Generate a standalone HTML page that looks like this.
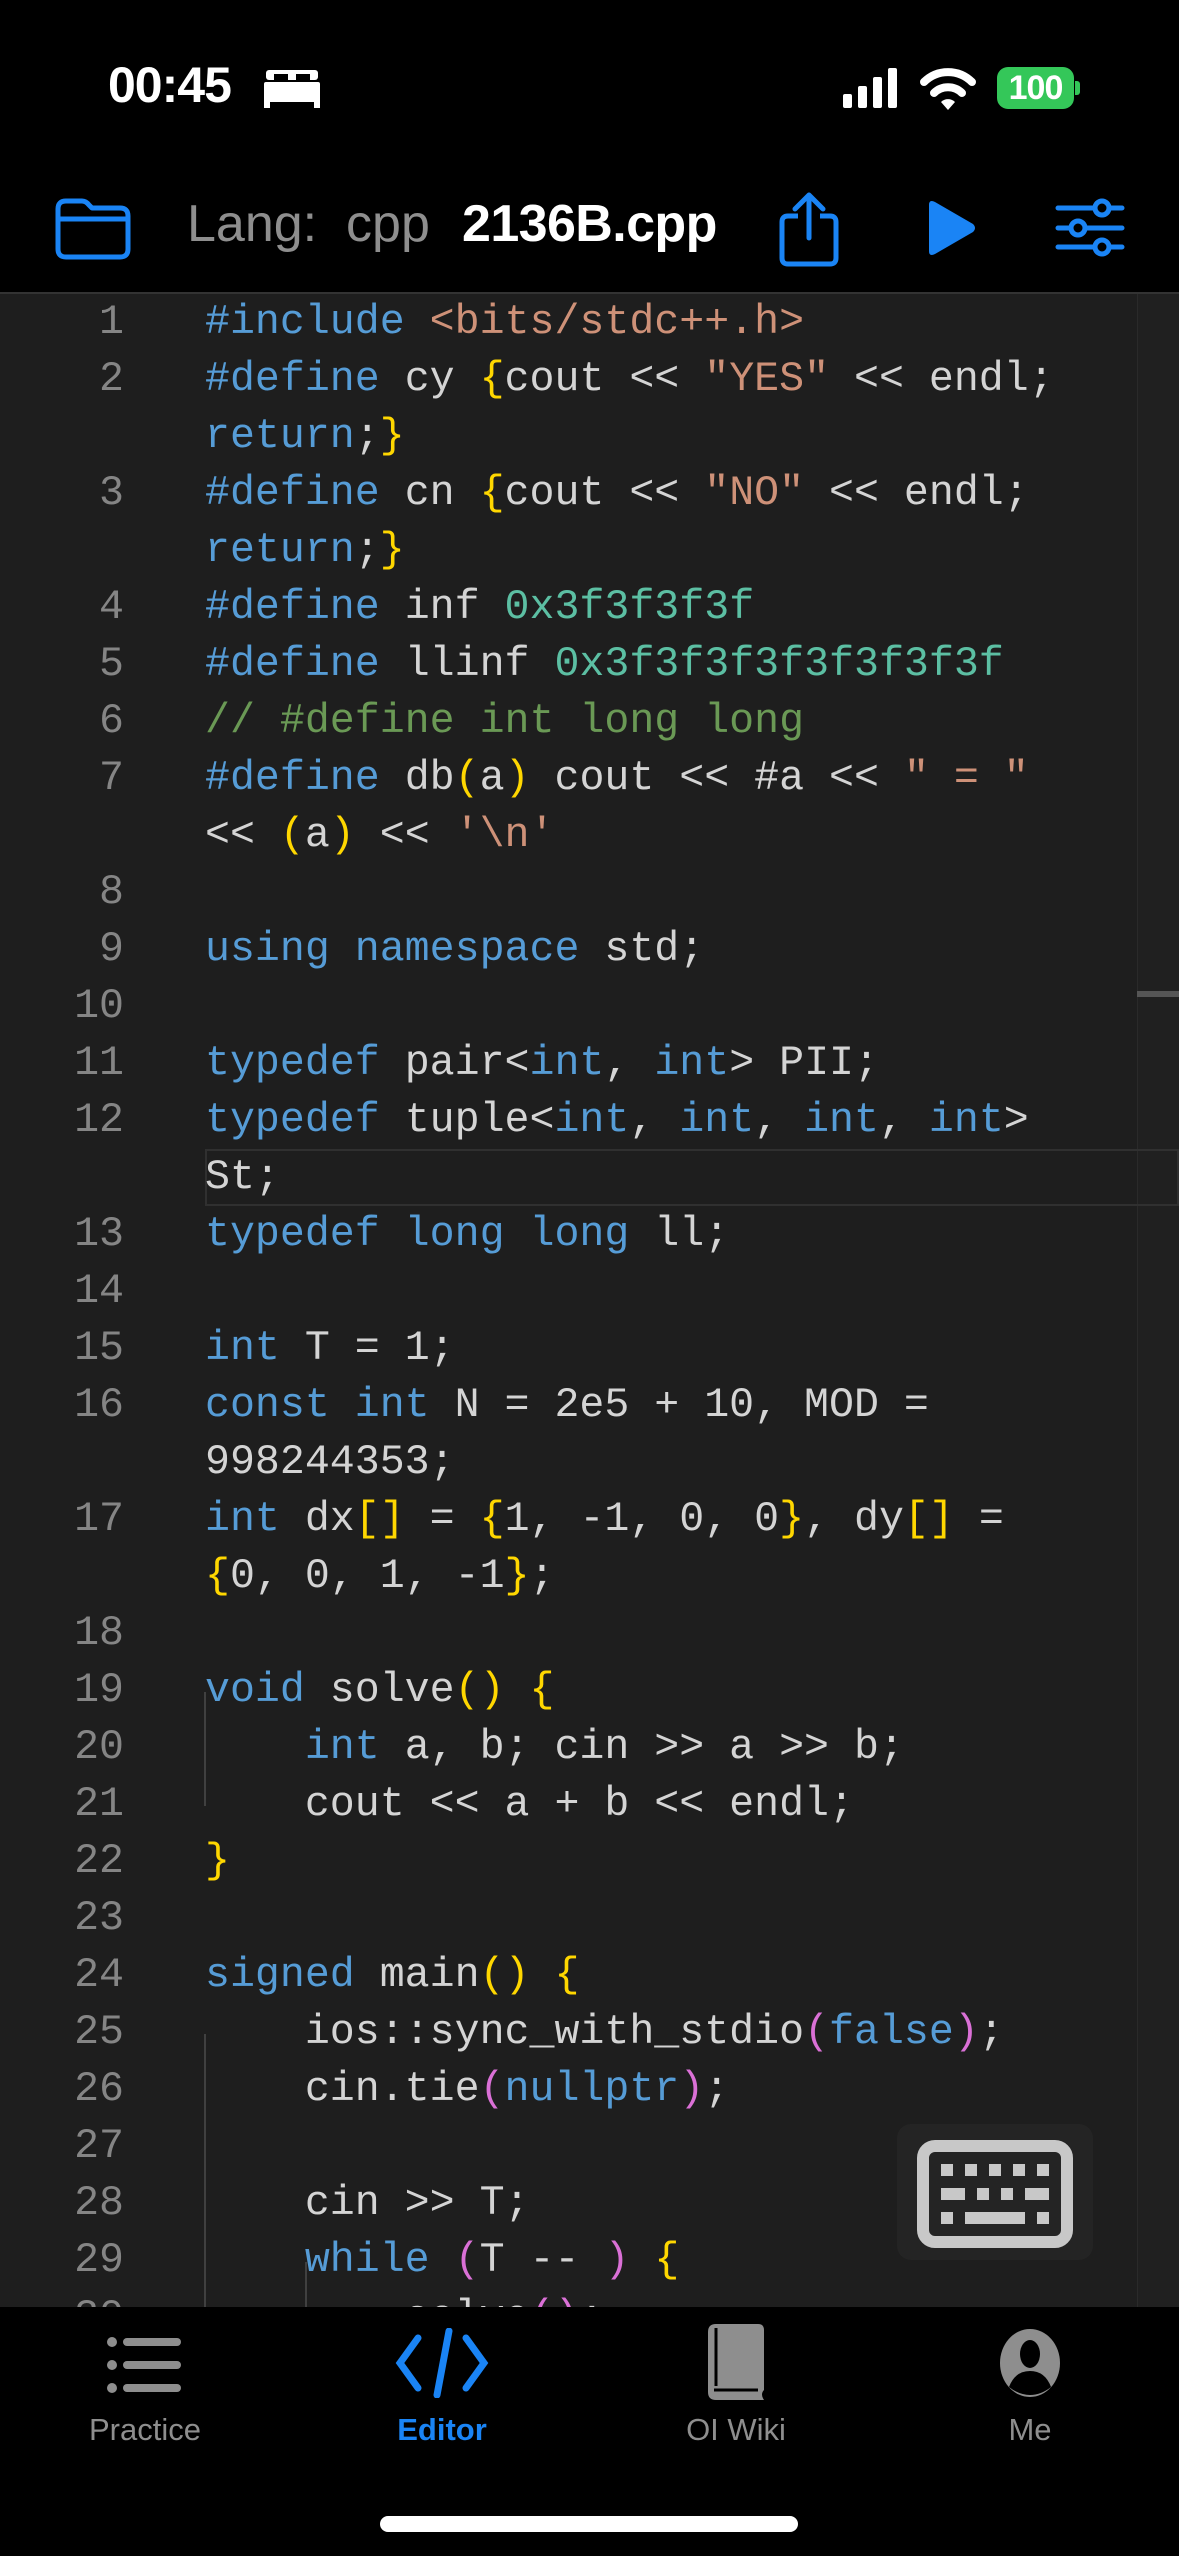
<!DOCTYPE html>
<html><head><meta charset="utf-8"><style>
*{margin:0;padding:0;box-sizing:border-box}
body{width:1179px;height:2556px;background:#000;position:relative;overflow:hidden;font-family:"Liberation Sans",sans-serif}
.abs{position:absolute}
#code{position:absolute;left:0;top:292px;width:1179px;height:2015px;background:#1e1e1e;border-top:2px solid #333;overflow:hidden}
#gutterR{position:absolute;left:1137px;top:0;width:42px;height:100%;background:#202020;border-left:1px solid #2a2a2a}
.row{position:absolute;left:0;height:57px;line-height:57px;font-family:"Liberation Mono",monospace;font-size:41.6px;white-space:pre;color:#d4d4d4;letter-spacing:0}
.ln{position:absolute;left:40px;width:84px;text-align:right;color:#858585}
.tx{position:absolute;left:205px}
.k{color:#569cd6}.s{color:#ce9178}.n{color:#5cbfa3}.c{color:#6a9955}.y{color:#ffd700}.p{color:#da70d6}
.tab{position:absolute;top:2412px;font-size:31px;color:#8e8e8e;text-align:center;width:200px}
</style></head><body>
<!-- status bar -->
<div class="abs" style="left:108px;top:56px;font-size:50px;font-weight:bold;color:#fff;letter-spacing:-1px">00:45</div>
<svg class="abs" style="left:264px;top:68px" width="56" height="40" viewBox="0 0 56 40"><rect x="2" y="2" width="52" height="10" rx="3" fill="#fff"/><rect x="0" y="14" width="56" height="20" rx="2" fill="#fff"/><rect x="0" y="30" width="6" height="10" fill="#fff"/><rect x="50" y="30" width="6" height="10" fill="#fff"/><rect x="10" y="6" width="14" height="8" fill="#000"/><rect x="32" y="6" width="14" height="8" fill="#000"/></svg>
<svg class="abs" style="left:843px;top:68px" width="58" height="40"><rect x="0" y="26" width="9" height="14" rx="2" fill="#fff"/><rect x="15" y="18" width="9" height="22" rx="2" fill="#fff"/><rect x="30" y="9" width="9" height="31" rx="2" fill="#fff"/><rect x="45" y="0" width="9" height="40" rx="2" fill="#fff"/></svg>
<svg class="abs" style="left:920px;top:66px" width="56" height="44" viewBox="0 0 56 44"><path d="M4 16 A34 34 0 0 1 52 16" stroke="#fff" stroke-width="8" fill="none" stroke-linecap="round"/><path d="M14 27 A20 20 0 0 1 42 27" stroke="#fff" stroke-width="8" fill="none" stroke-linecap="round"/><path d="M21 36 L28 44 L35 36 A10 10 0 0 0 21 36Z" fill="#fff"/></svg>
<div class="abs" style="left:997px;top:67px;width:77px;height:42px;background:#34c759;border-radius:11px;color:#fff;font-weight:bold;font-size:34px;line-height:42px;text-align:center;letter-spacing:-1px">100</div>
<div class="abs" style="left:1075px;top:81px;width:5px;height:14px;background:#34c759;border-radius:0 3px 3px 0"></div>
<!-- header -->
<svg class="abs" style="left:54px;top:197px" width="78" height="64" viewBox="0 0 78 64"><path d="M4 12 Q4 4 12 4 H28 Q32 4 35 8 L38 11 H66 Q74 11 74 19 V52 Q74 60 66 60 H12 Q4 60 4 52 Z M4 22 H74" stroke="#1a84f5" stroke-width="5" fill="none" stroke-linejoin="round"/></svg>
<div class="abs" style="left:187px;top:194px;font-size:52px;color:#8e8e8e;letter-spacing:0">Lang:&nbsp; cpp</div>
<div class="abs" style="left:462px;top:194px;font-size:52px;color:#fff;font-weight:bold;letter-spacing:-0.6px">2136B.cpp</div>
<svg class="abs" style="left:776px;top:190px" width="66" height="78" viewBox="0 0 66 78"><path d="M22 26 H12 Q6 26 6 32 V68 Q6 74 12 74 H54 Q60 74 60 68 V32 Q60 26 54 26 H44" stroke="#1a84f5" stroke-width="5" fill="none"/><path d="M33 48 V6 M19 19 L33 5 L47 19" stroke="#1a84f5" stroke-width="5" fill="none" stroke-linecap="round" stroke-linejoin="round"/></svg>
<svg class="abs" style="left:924px;top:199px" width="54" height="58" viewBox="0 0 54 58"><path d="M5 6 Q5 0 11 3 L49 25 Q53 29 49 33 L11 55 Q5 58 5 52 Z" fill="#1a84f5"/></svg>
<svg class="abs" style="left:1054px;top:195px" width="72" height="66" viewBox="0 0 72 66"><g stroke="#1a84f5" stroke-width="5" stroke-linecap="round" fill="none"><path d="M4 13 H40 M56 13 H68 M4 33 H16 M32 33 H68 M4 52 H40 M56 52 H68"/><circle cx="48" cy="13" r="7"/><circle cx="24" cy="33" r="7"/><circle cx="48" cy="52" r="7"/></g></svg>
<!-- code -->
<div id="code">
<div id="gutterR"></div>
<div class="abs" style="left:1137px;top:697px;width:42px;height:6px;background:#555"></div>
<div class="abs" style="left:205px;top:855px;width:974px;height:57px;border:2px solid #303030"></div>
<div class="abs" style="left:204px;top:1398px;width:2px;height:114px;background:#404040"></div>
<div class="abs" style="left:204px;top:1740px;width:2px;height:280px;background:#404040"></div>
<div class="abs" style="left:305px;top:1968px;width:2px;height:60px;background:#404040"></div>
<div class="row" style="top:0"><span class="ln">1</span><span class="tx"><span class="k">#include</span> <span class="s">&lt;bits/stdc++.h&gt;</span></span></div>
<div class="row" style="top:57px"><span class="ln">2</span><span class="tx"><span class="k">#define</span> cy <span class="y">{</span>cout &lt;&lt; <span class="s">"YES"</span> &lt;&lt; endl;</span></div>
<div class="row" style="top:114px"><span class="tx"><span class="k">return</span>;<span class="y">}</span></span></div>
<div class="row" style="top:171px"><span class="ln">3</span><span class="tx"><span class="k">#define</span> cn <span class="y">{</span>cout &lt;&lt; <span class="s">"NO"</span> &lt;&lt; endl;</span></div>
<div class="row" style="top:228px"><span class="tx"><span class="k">return</span>;<span class="y">}</span></span></div>
<div class="row" style="top:285px"><span class="ln">4</span><span class="tx"><span class="k">#define</span> inf <span class="n">0x3f3f3f3f</span></span></div>
<div class="row" style="top:342px"><span class="ln">5</span><span class="tx"><span class="k">#define</span> llinf <span class="n">0x3f3f3f3f3f3f3f3f</span></span></div>
<div class="row" style="top:399px"><span class="ln">6</span><span class="tx c">// #define int long long</span></div>
<div class="row" style="top:456px"><span class="ln">7</span><span class="tx"><span class="k">#define</span> db<span class="y">(</span>a<span class="y">)</span> cout &lt;&lt; #a &lt;&lt; <span class="s">" = "</span></span></div>
<div class="row" style="top:513px"><span class="tx">&lt;&lt; <span class="y">(</span>a<span class="y">)</span> &lt;&lt; <span class="s">'\n'</span></span></div>
<div class="row" style="top:570px"><span class="ln">8</span></div>
<div class="row" style="top:627px"><span class="ln">9</span><span class="tx"><span class="k">using namespace</span> std;</span></div>
<div class="row" style="top:684px"><span class="ln">10</span></div>
<div class="row" style="top:741px"><span class="ln">11</span><span class="tx"><span class="k">typedef</span> pair&lt;<span class="k">int</span>, <span class="k">int</span>&gt; PII;</span></div>
<div class="row" style="top:798px"><span class="ln">12</span><span class="tx"><span class="k">typedef</span> tuple&lt;<span class="k">int</span>, <span class="k">int</span>, <span class="k">int</span>, <span class="k">int</span>&gt;</span></div>
<div class="row" style="top:855px"><span class="tx">St;</span></div>
<div class="row" style="top:912px"><span class="ln">13</span><span class="tx"><span class="k">typedef long long</span> ll;</span></div>
<div class="row" style="top:969px"><span class="ln">14</span></div>
<div class="row" style="top:1026px"><span class="ln">15</span><span class="tx"><span class="k">int</span> T = 1;</span></div>
<div class="row" style="top:1083px"><span class="ln">16</span><span class="tx"><span class="k">const int</span> N = 2e5 + 10, MOD =</span></div>
<div class="row" style="top:1140px"><span class="tx">998244353;</span></div>
<div class="row" style="top:1197px"><span class="ln">17</span><span class="tx"><span class="k">int</span> dx<span class="y">[]</span> = <span class="y">{</span>1, -1, 0, 0<span class="y">}</span>, dy<span class="y">[]</span> =</span></div>
<div class="row" style="top:1254px"><span class="tx"><span class="y">{</span>0, 0, 1, -1<span class="y">}</span>;</span></div>
<div class="row" style="top:1311px"><span class="ln">18</span></div>
<div class="row" style="top:1368px"><span class="ln">19</span><span class="tx"><span class="k">void</span> solve<span class="y">()</span> <span class="y">{</span></span></div>
<div class="row" style="top:1425px"><span class="ln">20</span><span class="tx">    <span class="k">int</span> a, b; cin &gt;&gt; a &gt;&gt; b;</span></div>
<div class="row" style="top:1482px"><span class="ln">21</span><span class="tx">    cout &lt;&lt; a + b &lt;&lt; endl;</span></div>
<div class="row" style="top:1539px"><span class="ln">22</span><span class="tx y">}</span></div>
<div class="row" style="top:1596px"><span class="ln">23</span></div>
<div class="row" style="top:1653px"><span class="ln">24</span><span class="tx"><span class="k">signed</span> main<span class="y">()</span> <span class="y">{</span></span></div>
<div class="row" style="top:1710px"><span class="ln">25</span><span class="tx">    ios::sync_with_stdio<span class="p">(</span><span class="k">false</span><span class="p">)</span>;</span></div>
<div class="row" style="top:1767px"><span class="ln">26</span><span class="tx">    cin.tie<span class="p">(</span><span class="k">nullptr</span><span class="p">)</span>;</span></div>
<div class="row" style="top:1824px"><span class="ln">27</span></div>
<div class="row" style="top:1881px"><span class="ln">28</span><span class="tx">    cin &gt;&gt; T;</span></div>
<div class="row" style="top:1938px"><span class="ln">29</span><span class="tx">    <span class="k">while</span> <span class="p">(</span>T -- <span class="p">)</span> <span class="y">{</span></span></div>
<div class="row" style="top:1995px"><span class="ln">30</span><span class="tx">        solve<span class="p">()</span>;</span></div>
<div class="abs" style="left:897px;top:1830px;width:196px;height:136px;background:#242424;border-radius:14px"></div>
<svg class="abs" style="left:917px;top:1846px" width="156" height="108" viewBox="0 0 156 108"><rect x="6" y="6" width="144" height="96" rx="12" fill="none" stroke="#c8c8c8" stroke-width="12"/><g fill="#c8c8c8"><rect x="24" y="24" width="12" height="12"/><rect x="48" y="24" width="12" height="12"/><rect x="72" y="24" width="12" height="12"/><rect x="96" y="24" width="12" height="12"/><rect x="120" y="24" width="12" height="12"/><rect x="24" y="48" width="24" height="12"/><rect x="60" y="48" width="12" height="12"/><rect x="84" y="48" width="12" height="12"/><rect x="108" y="48" width="24" height="12"/><rect x="24" y="72" width="12" height="12"/><rect x="48" y="72" width="60" height="12"/><rect x="120" y="72" width="12" height="12"/></g></svg>
</div>
<!-- tab bar -->
<div class="abs" style="left:0;top:2307px;width:1179px;height:249px;background:#000"></div>
<svg class="abs" style="left:105px;top:2330px" width="80" height="70" viewBox="0 0 80 70"><g fill="#8e8e8e"><circle cx="7" cy="12" r="5"/><circle cx="7" cy="35" r="5"/><circle cx="7" cy="58" r="5"/><rect x="18" y="8" width="58" height="8" rx="4"/><rect x="18" y="31" width="58" height="8" rx="4"/><rect x="18" y="54" width="58" height="8" rx="4"/></g></svg>
<svg class="abs" style="left:392px;top:2328px" width="100" height="70" viewBox="0 0 100 70"><g stroke="#1a84f5" stroke-width="7" stroke-linecap="round" fill="none"><path d="M26 10 L8 35 L26 60 M74 10 L92 35 L74 60 M57 3 L45 67"/></g></svg>
<svg class="abs" style="left:706px;top:2324px" width="60" height="78" viewBox="0 0 60 78"><path d="M10 0 H52 Q58 0 58 6 V66 Q54 70 58 76 H10 Q2 76 2 68 V8 Q2 0 10 0Z" fill="#8e8e8e"/><path d="M10 4 V62 M8 66 H52" stroke="#000" stroke-width="3" fill="none"/></svg>
<svg class="abs" style="left:995px;top:2327px" width="70" height="72" viewBox="0 0 70 72"><ellipse cx="35" cy="36" rx="30" ry="34" fill="#8e8e8e"/><ellipse cx="35" cy="27" rx="10" ry="14" fill="#000"/><path d="M14 60 Q20 44 35 44 Q50 44 56 60 Q46 68 35 68 Q24 68 14 60Z" fill="#000"/></svg>
<div class="tab" style="left:45px">Practice</div>
<div class="tab" style="left:342px;color:#1a84f5;font-weight:bold">Editor</div>
<div class="tab" style="left:636px">OI Wiki</div>
<div class="tab" style="left:930px">Me</div>
<div class="abs" style="left:380px;top:2516px;width:418px;height:16px;background:#fff;border-radius:8px"></div>
</body></html>
